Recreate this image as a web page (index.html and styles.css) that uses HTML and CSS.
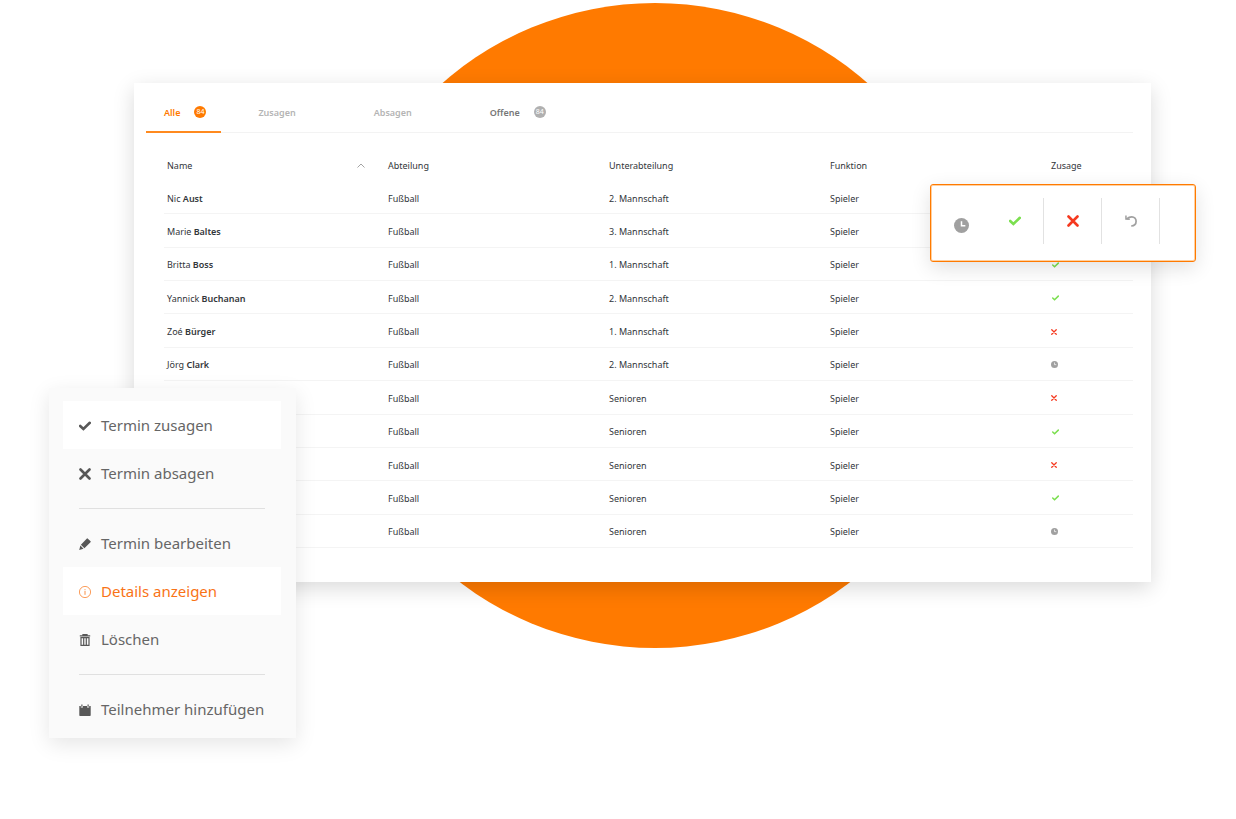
FILE: index.html
```html
<!DOCTYPE html>
<html lang="de">
<head>
    <meta charset="UTF-8">
    <meta name="viewport" content="width=device-width, initial-scale=1.0">
    <title>Termin Teilnehmer</title>
    <link rel="stylesheet" href="styles.css">
</head>
<body>
    <!-- Icons -->
    <svg class="sprite" aria-hidden="true">
        <symbol id="check" viewBox="0 0 12 10">
            <path d="M1.2 5 L4.4 8 L10.8 1.8" fill="none" stroke="currentColor" stroke-width="2.6" stroke-linecap="round"/>
        </symbol>
        <symbol id="cross" viewBox="0 0 12 12">
            <path d="M1.5 1.5 L10.5 10.5 M10.5 1.5 L1.5 10.5" fill="none" stroke="currentColor" stroke-width="2.6" stroke-linecap="round"/>
        </symbol>
        <symbol id="clock" viewBox="0 0 14 14">
            <circle cx="7" cy="7" r="7" fill="currentColor"/>
            <path d="M7 3 V7.3 H10.6" fill="none" stroke="#fff" stroke-width="1.4"/>
        </symbol>
        <symbol id="undo" viewBox="0 0 12 12">
            <path d="M1.6 3.9 C3.4 2.4 5 1.8 6.8 1.8 C9.4 1.8 11.1 3.8 11.1 6.2 C11.1 8.8 9.2 10.8 6.2 11" fill="none" stroke="currentColor" stroke-width="1.7"/>
            <path d="M0.2 0.4 L1.7 0.6 L1.7 2.9 L4.8 3.5 L4.8 4.9 L0.2 4.7 Z" fill="currentColor"/>
        </symbol>
        <symbol id="pencil" viewBox="0 0 12 12">
            <path d="M8.6 0.4 L11.6 3.2 Q12 3.8 11.5 4.3 L5.4 10.2 L1.9 6.8 L7.9 0.6 Q8.2 0.2 8.6 0.4 Z M1.4 7.6 L4.5 10.8 L0.2 12 Z" fill="currentColor"/>
        </symbol>
        <symbol id="info" viewBox="0 0 12 12">
            <circle cx="6" cy="6" r="5.6" fill="none" stroke="currentColor" stroke-width="0.7"/>
            <path d="M6 5 V8.8 M6 3.2 V4.2" stroke="currentColor" stroke-width="0.8"/>
        </symbol>
        <symbol id="trash" viewBox="0 0 12 12">
            <path d="M0.8 1.8 H11.2 M4 1.5 V0.5 H8 V1.5" fill="none" stroke="currentColor" stroke-width="1.3"/>
            <path d="M2 3.6 H10 V11.4 H2 Z M4.7 3.6 V11 M7.3 3.6 V11" fill="none" stroke="currentColor" stroke-width="1.2"/>
        </symbol>
        <symbol id="calendar" viewBox="0 0 12 12">
            <path d="M0.3 2 H1.8 V3.4 H4 V2 H8 V3.4 H10.2 V2 H11.7 V11.2 Q11.7 12 11 12 H1 Q0.3 12 0.3 11.2 Z M2.3 0.4 H3.5 V2.8 H2.3 Z M8.5 0.4 H9.7 V2.8 H8.5 Z" fill="currentColor"/>
        </symbol>
    </svg>

    <div class="stage">
        <div class="circle"></div>

        <main class="panel">
            <nav class="tabs">
                <button class="tab active">Alle <span class="badge">84</span></button>
                <button class="tab">Zusagen <span class="badge empty"></span></button>
                <button class="tab">Absagen <span class="badge empty"></span></button>
                <button class="tab open">Offene <span class="badge">84</span></button>
            </nav>
            <table class="members">
                <thead>
                    <tr>
                        <th><div class="sort">Name <svg viewBox="0 0 8 5"><path d="M0.5 4.5 L4 1 L7.5 4.5" fill="none" stroke="#999" stroke-width="0.9"/></svg></div></th>
                        <th>Abteilung</th>
                        <th>Unterabteilung</th>
                        <th>Funktion</th>
                        <th>Zusage</th>
                    </tr>
                </thead>
                <tbody>
                    <tr><td>Nic <b>Aust</b></td><td>Fußball</td><td>2. Mannschaft</td><td>Spieler</td><td></td></tr>
                    <tr><td>Marie <b>Baltes</b></td><td>Fußball</td><td>3. Mannschaft</td><td>Spieler</td><td></td></tr>
                    <tr><td>Britta <b>Boss</b></td><td>Fußball</td><td>1. Mannschaft</td><td>Spieler</td><td><svg class="state yes"><use href="#check"/></svg></td></tr>
                    <tr><td>Yannick <b>Buchanan</b></td><td>Fußball</td><td>2. Mannschaft</td><td>Spieler</td><td><svg class="state yes"><use href="#check"/></svg></td></tr>
                    <tr><td>Zoé <b>Bürger</b></td><td>Fußball</td><td>1. Mannschaft</td><td>Spieler</td><td><svg class="state no"><use href="#cross"/></svg></td></tr>
                    <tr><td>Jörg <b>Clark</b></td><td>Fußball</td><td>2. Mannschaft</td><td>Spieler</td><td><svg class="state wait"><use href="#clock"/></svg></td></tr>
                    <tr><td></td><td>Fußball</td><td>Senioren</td><td>Spieler</td><td><svg class="state no"><use href="#cross"/></svg></td></tr>
                    <tr><td></td><td>Fußball</td><td>Senioren</td><td>Spieler</td><td><svg class="state yes"><use href="#check"/></svg></td></tr>
                    <tr><td></td><td>Fußball</td><td>Senioren</td><td>Spieler</td><td><svg class="state no"><use href="#cross"/></svg></td></tr>
                    <tr><td></td><td>Fußball</td><td>Senioren</td><td>Spieler</td><td><svg class="state yes"><use href="#check"/></svg></td></tr>
                    <tr><td></td><td>Fußball</td><td>Senioren</td><td>Spieler</td><td><svg class="state wait"><use href="#clock"/></svg></td></tr>
                </tbody>
            </table>
        </main>

        <div class="popup">
            <svg class="popup-clock"><use href="#clock"/></svg>
            <button class="answer yes" aria-label="Zusagen"><svg><use href="#check"/></svg></button>
            <button class="answer no" aria-label="Absagen"><svg><use href="#cross"/></svg></button>
            <button class="answer undo" aria-label="Zurücksetzen"><svg><use href="#undo"/></svg></button>
        </div>

        <div class="menu">
            <button class="menu-item light"><svg><use href="#check"/></svg>Termin zusagen</button>
            <button class="menu-item"><svg><use href="#cross"/></svg>Termin absagen</button>
            <hr>
            <button class="menu-item"><svg><use href="#pencil"/></svg>Termin bearbeiten</button>
            <button class="menu-item light current"><svg><use href="#info"/></svg>Details anzeigen</button>
            <button class="menu-item"><svg><use href="#trash"/></svg>Löschen</button>
            <hr>
            <button class="menu-item"><svg><use href="#calendar"/></svg>Teilnehmer hinzufügen</button>
        </div>
    </div>
</body>
</html>
```
FILE: styles.css
```css
* {
    box-sizing: border-box;
}
body {
    margin: 0;
    font-family: "Noto Sans", "Open Sans", sans-serif;
    font-size: 9px;
    background-color: #fff;
    color: #32363a;
}
button {
    border: none;
    background: none;
    padding: 0;
    font: inherit;
    color: inherit;
    cursor: pointer;
}
.sprite {
    display: none;
}
.stage {
    position: relative;
    min-height: 100vh;
    padding: 83px 85px 0 134px;
}
.circle {
    position: absolute;
    top: 3px;
    left: 53%;
    width: 645px;
    height: 645px;
    border-radius: 50%;
    background-color: #ff7a00;
    transform: translateX(-50%);
}
.panel {
    position: relative;
    padding: 0 18px 34px 30px;
    background-color: #fff;
    box-shadow: 0 6px 20px rgba(0, 0, 0, 0.15);
}

/* Tabs */
.tabs {
    display: flex;
    gap: 19px;
    height: 50px;
    margin-left: -18px;
    margin-bottom: 15px;
    border-bottom: 1px solid #f3f3f3;
}
.tab {
    display: flex;
    align-items: center;
    gap: 14px;
    height: 50px;
    padding: 12px 15px 2px 18px;
    font-weight: 600;
    color: #b4b4b4;
    border-bottom: 2px solid transparent;
}
.tab.active {
    color: #ff7a00;
    border-color: #ff8a1f;
}
.tab.open {
    color: #777;
}
.badge {
    width: 12px;
    height: 12px;
    border-radius: 50%;
    background-color: #b0b0b0;
    color: #fff;
    font-size: 7px;
    font-weight: 400;
    line-height: 12px;
    text-align: center;
}
.active .badge {
    background-color: #ff7a00;
}
.badge.empty {
    visibility: hidden;
}

/* Table */
.members {
    width: 100%;
    height: 400px;
    table-layout: fixed;
    border-collapse: separate;
    border-spacing: 0;
}
.members th,
.members td {
    width: 221px;
    height: 33px;
    padding: 2px 0 0 3px;
    text-align: left;
    font-weight: 400;
}
.members th:last-child {
    width: auto;
}
.members td {
    border-bottom: 1px solid #f4f4f4;
}
.members b {
    font-weight: 600;
}
.sort {
    display: flex;
    align-items: center;
    justify-content: space-between;
    padding-right: 20px;
}
.sort svg {
    width: 8px;
    height: 5px;
}
.state {
    display: block;
}
.yes {
    color: #7bdf4f;
}
.no {
    color: #f5391f;
}
.wait {
    color: #a0a0a0;
}
.state.yes {
    width: 7px;
    height: 6px;
    margin-left: 1px;
}
.state.no {
    width: 6px;
    height: 6px;
}
.state.wait {
    width: 7px;
    height: 7px;
}

/* Answer popup */
.popup {
    position: absolute;
    top: 184px;
    right: 40px;
    display: flex;
    align-items: center;
    width: 266px;
    height: 78px;
    padding-left: 23px;
    padding-bottom: 4px;
    background-color: #fff;
    border: 1px solid #ff7a00;
    border-radius: 3px;
    box-shadow: inset 0 0 0 1px #ffd0a0, 0 6px 20px rgba(0, 0, 0, 0.12);
}
.popup-clock {
    width: 15px;
    height: 15px;
    margin-top: 8px;
    margin-right: 17px;
    color: #a0a0a0;
}
.answer {
    display: flex;
    align-items: center;
    justify-content: center;
    width: 58px;
    height: 46px;
    border-right: 1px solid #e2e2e2;
}
.answer svg {
    width: 12px;
    height: 12px;
}
.answer.undo {
    color: #a0a0a0;
}

/* Context menu */
.menu {
    position: absolute;
    top: 388px;
    left: 49px;
    width: 247px;
    padding: 13px 15px 5px 14px;
    background-color: #fafafa;
    box-shadow: 0 6px 20px rgba(0, 0, 0, 0.1);
}
.menu-item {
    display: flex;
    align-items: center;
    gap: 10px;
    width: 100%;
    height: 48px;
    padding-left: 16px;
    font-size: 15px;
    color: #666;
    white-space: nowrap;
}
.menu-item svg {
    width: 12px;
    height: 12px;
    margin-top: 2px;
    color: #585858;
}
.menu-item.light {
    background-color: #fff;
}
.menu-item.current,
.menu-item.current svg {
    color: #f97316;
}
.menu hr {
    height: 1px;
    margin: 11px 16px 10px;
    border: none;
    background-color: #e0e0e0;
}
```
